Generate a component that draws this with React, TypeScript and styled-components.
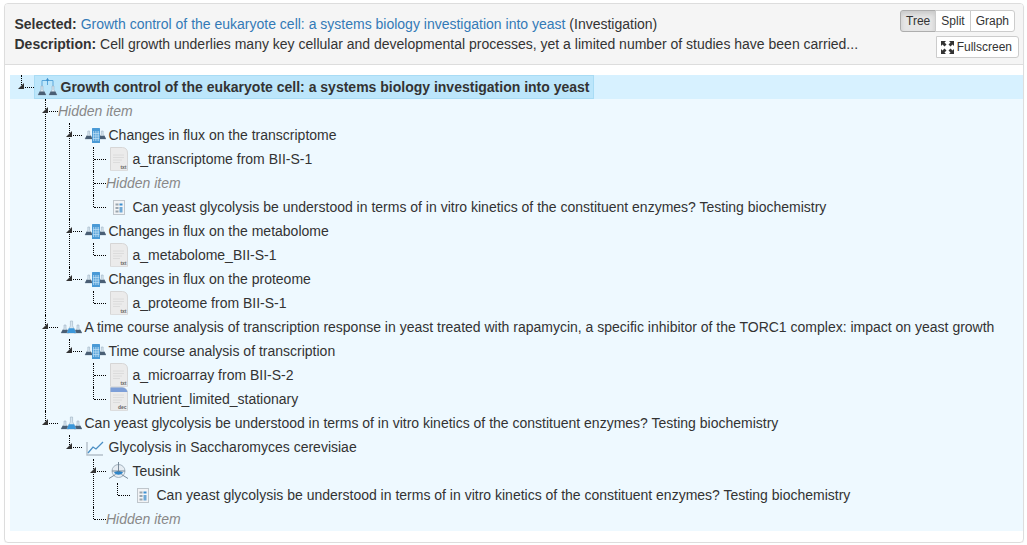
import styled, { createGlobalStyle } from "styled-components";

const GlobalStyle = createGlobalStyle`
  html, body {
    margin: 0;
    padding: 0;
    background: #fff;
    font-family: "Liberation Sans", Arial, sans-serif;
    font-size: 14px;
    color: #333;
  }
`;

const Panel = styled.div`
  box-sizing: border-box;
  width: 1020px;
  height: 540px;
  margin: 3px 0 0 4px;
  border: 1px solid #ddd;
  border-radius: 4px;
  box-shadow: 0 1px 1px rgba(0, 0, 0, 0.05);
`;

const Header = styled.div`
  box-sizing: border-box;
  display: flex;
  justify-content: space-between;
  height: 61px;
  padding: 10px 4px 0 9.5px;
  background: #f5f5f5;
  border-bottom: 1px solid #ddd;
  border-radius: 3px 3px 0 0;
`;

const Summary = styled.div`
  line-height: 20px;
`;

const SummaryLink = styled.a`
  color: #337ab7;
  text-decoration: none;
`;

const Controls = styled.div`
  display: flex;
  flex-direction: column;
  align-items: flex-end;
  gap: 4px;
  margin-top: -4px;
`;

const ButtonGroup = styled.div`
  display: flex;
  margin-right: 4px;
`;

const Button = styled.button<{ $active?: boolean }>`
  box-sizing: border-box;
  display: flex;
  align-items: center;
  gap: 3px;
  height: 22px;
  margin: 0 0 0 -1px;
  padding: 0 5px;
  font: 12px "Liberation Sans", Arial, sans-serif;
  color: #333;
  background: ${(p) => (p.$active ? "#e6e6e6" : "#fff")};
  border: 1px solid ${(p) => (p.$active ? "#adadad" : "#ccc")};
  box-shadow: ${(p) => (p.$active ? "inset 0 3px 5px rgba(0,0,0,.125)" : "none")};
  border-radius: 0;
  &:first-child {
    border-radius: 3px 0 0 3px;
  }
  &:last-child {
    border-radius: 0 3px 3px 0;
  }
`;

const SoloButton = styled(Button)`
  padding: 0 6px 0 4px;
  &:first-child:last-child {
    border-radius: 3px;
  }
`;

const Tree = styled.ul`
  list-style: none;
  margin: 10px 0 0 5px;
  padding: 0;
  background: #eef9ff;
`;

const Branch = styled.ul`
  list-style: none;
  margin: 0;
  padding: 0;
`;

const Node = styled.li`
  position: relative;
  padding-left: 24px;
`;

const Strip = styled.div`
  position: absolute;
  left: 0;
  right: 0;
  top: 0;
  height: 24px;
  background: #d7f1ff;
`;

const Stem = styled.span<{ $last: boolean }>`
  position: absolute;
  left: 11px;
  top: 0;
  ${(p) => (p.$last ? "height: 12px;" : "bottom: 0;")}
  border-left: 1px dotted #000;
`;

const Tick = styled.span`
  position: absolute;
  left: 12px;
  top: 12px;
  width: 12px;
  border-top: 1px dotted #000;
`;

const Expander = styled.span`
  position: absolute;
  left: 8px;
  top: 8px;
  width: 6px;
  height: 6px;
  background: #333;
  clip-path: polygon(100% 0, 100% 100%, 0 100%);
`;

const Row = styled.div`
  position: relative;
  display: flex;
  align-items: center;
  height: 24px;
  white-space: nowrap;
`;

const Title = styled.span<{ $selected?: boolean; $hidden?: boolean }>`
  display: flex;
  align-items: center;
  height: 24px;
  color: ${(p) => (p.$hidden ? "#888" : "#333")};
  font-style: ${(p) => (p.$hidden ? "italic" : "normal")};
  font-weight: ${(p) => (p.$selected ? "bold" : "normal")};
  ${(p) =>
    p.$selected &&
    `background: #bce6fb; box-shadow: inset 0 0 0 1px #a9dcf5; padding-right: 4.5px;`}
`;

const IconBox = styled.svg`
  flex: none;
  width: 24px;
  height: 24px;
  margin-right: 2.5px;
`;

const Flask = ({ x, y, w, h, fill = "#4a5f75" }: { x: number; y: number; w: number; h: number; fill?: string }) => (
  <g>
    <path
      d={`M${x + w * 0.38} ${y}h${w * 0.24}v${h * 0.4}L${x + w} ${y + h}H${x}L${x + w * 0.38} ${y + h * 0.4}z`}
      fill="#d8e6f0"
      stroke="#9db2c2"
      strokeWidth="0.6"
    />
    <path d={`M${x + w * 0.2} ${y + h * 0.6}H${x + w * 0.8}L${x + w} ${y + h}H${x}z`} fill={fill} />
  </g>
);

const InvestigationIcon = () => (
  <IconBox viewBox="0 0 24 24">
    <path d="M8 11V5.5h11V11M13.5 3v7" fill="none" stroke="#5aa6da" strokeWidth="1" />
    <circle cx="13.5" cy="5" r="1.2" fill="#3a8fcc" />
    <Flask x={4} y={11} w={8} h={9} />
    <Flask x={15} y={11} w={8} h={9} />
  </IconBox>
);

const AssayIcon = () => (
  <IconBox viewBox="0 0 24 24">
    <Flask x={3} y={8} w={7.5} h={8} />
    <Flask x={16.5} y={8} w={7.5} h={8} />
    <rect x="10" y="5" width="8" height="15" rx="0.5" fill="#4a9ad6" />
    <path d="M11.5 8v10M13.3 8v10M15 8v10M16.6 8v10M10.8 10.5h6.5M10.8 13h6.5M10.8 15.5h6.5" stroke="#bfe0f5" strokeWidth="0.7" />
  </IconBox>
);

const StudyIcon = () => (
  <IconBox viewBox="0 0 24 24">
    <Flask x={3} y={10} w={8} h={8} />
    <Flask x={16} y={10} w={8} h={8} />
    <Flask x={9} y={6} w={9} h={12} fill="#3b97da" />
  </IconBox>
);

const DocIcon = ({ label, banner }: { label: string; banner?: boolean }) => (
  <IconBox viewBox="0 0 24 24">
    <path d="M4.5 0.5H16.5Q21.5 1 21.5 6V23a.8.8 0 0 1-.8.8H5.3a.8.8 0 0 1-.8-.8z" fill="#ebebeb" stroke="#d6d6d6" />
    {banner && <path d="M4.5 5V0.5H16.5Q20.5 1 21.5 5z" fill="#7d9fd8" />}
    <path d="M7 8h11M7 10.5h11M7 13h9M7 15.5h7" stroke="#d8d8d8" strokeWidth="0.8" />
    <text x="20.5" y="22" textAnchor="end" fontSize="5" fontWeight="bold" fontFamily="Liberation Sans" fill="#666">
      {label}
    </text>
  </IconBox>
);

const DataFileIcon = () => (
  <IconBox viewBox="0 0 24 24">
    <rect x="7.5" y="5.5" width="11" height="14" fill="#f2f4f6" stroke="#bfc6cc" />
    <path d="M9.5 8.5h3v2h-3zM9.5 12h3v2h-3zM9.5 15.5h3v2h-3z" fill="#9aa5ae" />
    <path d="M13.5 8.5h3v2h-3z" fill="#3b8fd0" />
    <path d="M13.5 12h3v5.5h-3z" fill="#6fa9d6" />
  </IconBox>
);

const ChartIcon = () => (
  <IconBox viewBox="0 0 24 24">
    <path d="M5 7v13h16" fill="none" stroke="#b4c0ca" strokeWidth="1.4" />
    <path d="M6 18l5-6 3 2 7-7" fill="none" stroke="#4a8fc4" strokeWidth="1.3" />
  </IconBox>
);

const ModelIcon = () => (
  <IconBox viewBox="0 0 24 24">
    <circle cx="12.5" cy="12" r="6.5" fill="#e6edf3" stroke="#93a4b2" strokeWidth="0.8" />
    <path d="M8 13.5a5 4 0 0 0 9 0c-2.5 -2-6.5-2-9 0z" fill="#2f86c8" />
    <path d="M12.5 3v10M3 19.5l6.5-4M22 19.5l-6.5-4M6 12h13" stroke="#6c7f8f" strokeWidth="0.9" fill="none" />
  </IconBox>
);

type Item = {
  text: string;
  icon?: React.ReactNode;
  hidden?: boolean;
  children?: Item[];
};

const STUDY_TITLE = "Can yeast glycolysis be understood in terms of in vitro kinetics of the constituent enzymes? Testing biochemistry";
const HIDDEN: Item = { text: "Hidden item", hidden: true };

const items: Item[] = [
  {
    text: "Hidden item",
    hidden: true,
    children: [
      {
        text: "Changes in flux on the transcriptome",
        icon: <AssayIcon />,
        children: [
          { text: "a_transcriptome from BII-S-1", icon: <DocIcon label="txt" /> },
          HIDDEN,
          { text: STUDY_TITLE, icon: <DataFileIcon /> },
        ],
      },
      {
        text: "Changes in flux on the metabolome",
        icon: <AssayIcon />,
        children: [{ text: "a_metabolome_BII-S-1", icon: <DocIcon label="txt" /> }],
      },
      {
        text: "Changes in flux on the proteome",
        icon: <AssayIcon />,
        children: [{ text: "a_proteome from BII-S-1", icon: <DocIcon label="txt" /> }],
      },
    ],
  },
  {
    text: "A time course analysis of transcription response in yeast treated with rapamycin, a specific inhibitor of the TORC1 complex: impact on yeast growth",
    icon: <StudyIcon />,
    children: [
      {
        text: "Time course analysis of transcription",
        icon: <AssayIcon />,
        children: [
          { text: "a_microarray from BII-S-2", icon: <DocIcon label="txt" /> },
          { text: "Nutrient_limited_stationary", icon: <DocIcon label="dec" banner /> },
        ],
      },
    ],
  },
  {
    text: STUDY_TITLE,
    icon: <StudyIcon />,
    children: [
      {
        text: "Glycolysis in Saccharomyces cerevisiae",
        icon: <ChartIcon />,
        children: [
          {
            text: "Teusink",
            icon: <ModelIcon />,
            children: [{ text: STUDY_TITLE, icon: <DataFileIcon /> }],
          },
          HIDDEN,
        ],
      },
    ],
  },
];

function TreeNode({ item, last }: { item: Item; last: boolean }) {
  return (
    <Node>
      <Stem $last={last} />
      <Tick />
      {item.children && <Expander />}
      <Row>
        {item.icon}
        <Title $hidden={item.hidden}>{item.text}</Title>
      </Row>
      {item.children && <NodeList items={item.children} />}
    </Node>
  );
}

function NodeList({ items }: { items: Item[] }) {
  return (
    <Branch>
      {items.map((item, i) => (
        <TreeNode key={i} item={item} last={i === items.length - 1} />
      ))}
    </Branch>
  );
}

const FullscreenIcon = () => (
  <svg width="13" height="13" viewBox="0 0 13 13" fill="#333">
    <path d="M0 0h5L3.5 1.5 5.5 3.5 3.5 5.5 1.5 3.5 0 5zM13 0v5L11.5 3.5 9.5 5.5 7.5 3.5 9.5 1.5 8 0zM0 13V8l1.5 1.5 2-2 2 2-2 2L5 13zM13 13H8l1.5-1.5-2-2 2-2 2 2L13 8z" />
  </svg>
);

export default function App() {
  return (
    <Panel>
      <GlobalStyle />
      <Header>
        <Summary>
          <div>
            <b>Selected:</b>{" "}
            <SummaryLink href="#">Growth control of the eukaryote cell: a systems biology investigation into yeast</SummaryLink>{" "}
            (Investigation)
          </div>
          <div>
            <b>Description:</b> Cell growth underlies many key cellular and developmental processes, yet a limited number of studies have been carried...
          </div>
        </Summary>
        <Controls>
          <ButtonGroup>
            <Button $active>Tree</Button>
            <Button>Split</Button>
            <Button>Graph</Button>
          </ButtonGroup>
          <SoloButton>
            <FullscreenIcon />
            Fullscreen
          </SoloButton>
        </Controls>
      </Header>
      <Tree>
        <Node>
          <Strip />
          <Stem $last />
          <Tick />
          <Expander />
          <Row>
            <Title $selected>
              <InvestigationIcon />
              Growth control of the eukaryote cell: a systems biology investigation into yeast
            </Title>
          </Row>
          <NodeList items={items} />
        </Node>
      </Tree>
    </Panel>
  );
}
